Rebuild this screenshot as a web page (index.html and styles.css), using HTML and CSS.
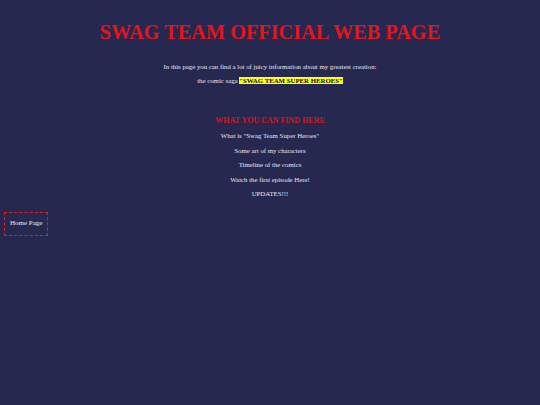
FILE: index.html
```html
<!DOCTYPE html>
<html>
<head>
<meta charset="utf-8">
<link rel="stylesheet" href="styles.css">
</head>
<body>
<header class="top">
  <h1 class="title">SWAG TEAM OFFICIAL WEB PAGE</h1>
  <p class="intro">In this page you can find a lot of juicy information about my greatest creation:</p>
  <p class="intro">the comic saga <span class="hl">"SWAG TEAM SUPER HEROES"</span></p>
</header>
<section class="find">
  <h2 class="find-title">WHAT YOU CAN FIND HERE</h2>
  <ul class="menu">
    <li><a class="item">What is "Swag Team Super Heroes"</a></li>
    <li><a class="item">Some art of my characters</a></li>
    <li><a class="item">Timeline of the comics</a></li>
    <li><a class="item">Watch the first episode Here!</a></li>
    <li><a class="item">UPDATES!!!</a></li>
  </ul>
</section>
<nav class="side">
  <a class="home">Home Page</a>
</nav>
</body>
</html>
```

FILE: styles.css
```css
html, body {
  margin: 0;
  padding: 0;
  background: #262850;
  height: 100%;
}
body {
  font-family: "Liberation Serif", "Times New Roman", serif;
  color: #e6e6f2;
}
.top {
  text-align: center;
  padding-top: 21px;
}
.title {
  margin: 0;
  font-size: 20.3px;
  line-height: 22px;
  font-weight: bold;
  color: #e0161c;
}
.intro {
  margin: 0;
  font-size: 6.8px;
  line-height: 14px;
}
.intro:first-of-type {
  margin-top: 17px;
}
.hl {
  background: #ffff1a;
  color: #101010;
  font-weight: bold;
}
.find {
  text-align: center;
  padding-top: 27px;
}
.find-title {
  margin: 0;
  font-size: 8px;
  line-height: 12px;
  font-weight: bold;
  color: #d8151c;
}
.menu {
  list-style: none;
  margin: 2px 0 0;
  padding: 0;
}
.menu li {
  font-size: 6.8px;
  line-height: 14.5px;
}
.item {
  color: #e6e6f2;
}
.side {
  padding: 9px 0 0 4px;
}
.home {
  display: inline-block;
  border: 1px dashed #e02028;
  padding: 7px 5px 8px;
  font-size: 7px;
  line-height: 7px;
  color: #ececf6;
}
```
